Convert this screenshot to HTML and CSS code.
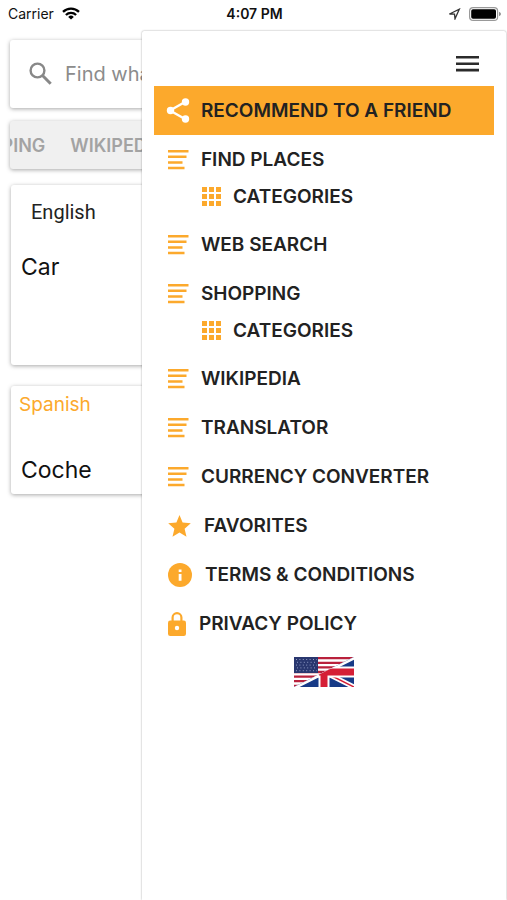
FILE: index.html
```html
<!DOCTYPE html>
<html lang="en">
<head>
<meta charset="utf-8">
<meta name="viewport" content="width=device-width, initial-scale=1">
<title>Translator</title>
<link rel="stylesheet" href="styles.css">
</head>
<body>
<svg class="sprite" aria-hidden="true">
  <symbol id="lines" viewBox="0 0 21 20"><path d="M0 0h20.500v2.500H0zM0 5.600h18.500v2.500H0zM0 11.200h14.500v2.500H0zM0 16.800h16.500v2.500H0z"/></symbol>
  <symbol id="grid" viewBox="0 0 19 19"><path d="M0 0h5v5H0zM7 0h5v5H7zM14 0h5v5h-5zM0 7h5v5H0zM7 7h5v5H7zM14 7h5v5h-5zM0 14h5v5H0zM7 14h5v5H7zM14 14h5v5h-5z"/></symbol>
</svg>
<div class="app">
  <header class="status">
    <div class="status-left">
      <span>Carrier</span>
      <svg width="18" height="13" viewBox="0 0 18 13"><g fill="none" stroke="#000" stroke-width="2.300"><path d="M1 4.900a11.400 11.400 0 0 1 16 0"/><path d="M3.900 8a7.300 7.300 0 0 1 10.200 0"/></g><path d="M9 12.600 6.200 9.900a4 4 0 0 1 5.600 0z"/></svg>
    </div>
    <time class="clock">4:07 PM</time>
    <div class="status-right">
      <svg width="13" height="12" viewBox="0 0 13 12"><path d="M1.500 6 11.300 1.200 7 10.800 6.500 6.200z" fill="none" stroke="#333" stroke-width="1.300"/></svg>
      <svg width="32" height="14" viewBox="0 0 32 14"><rect x=".6" y=".6" width="28" height="12.800" rx="3.500" fill="#fff" stroke="#999" stroke-width="1.200"/><rect x="2.200" y="2.200" width="24.800" height="9.600" rx="1.800"/><path d="M30.200 4.800q1.600.7 1.600 2.200t-1.600 2.200z" fill="#777"/></svg>
    </div>
  </header>

  <main class="page">
    <label class="card search">
      <svg width="24" height="24" viewBox="0 0 24 24"><g fill="none" stroke="#888" stroke-width="2.400"><circle cx="8.500" cy="8.500" r="6.900"/><path d="m13.500 13.500 8.200 8.200" stroke-width="3"/></g></svg>
      <input type="text" aria-label="Search" placeholder="Find what you need">
    </label>
    <nav class="card tabs"><div class="tabs-track"><a href="#shopping">SHOPPING</a><a href="#wikipedia">WIKIPEDIA</a></div></nav>
    <section class="card source"><h2>English</h2><p>Car</p></section>
    <section class="card result"><h2>Spanish</h2><p>Coche</p></section>
  </main>

  <aside class="drawer">
    <div class="drawer-top">
      <button class="toggle" type="button" aria-label="Menu"><svg width="23" height="16" viewBox="0 0 23 16"><path d="M0 0h23v2.600H0zM0 6.400h23V9H0zM0 12.800h23v2.600H0z" fill="#2b2b2b"/></svg></button>
    </div>
    <nav class="menu">
      <a class="item active" href="#share"><svg width="24" height="26" viewBox="0 0 24 26"><path d="M19 4 4 12.500l15 8.500" fill="none" stroke="#fff" stroke-width="2.400"/><g fill="#fff"><circle cx="19.500" cy="4" r="3.700"/><circle cx="4.500" cy="12.500" r="3.700"/><circle cx="19.500" cy="21" r="3.700"/></g></svg>RECOMMEND TO A FRIEND</a>
      <a class="item" href="#places"><svg class="lines"><use href="#lines"/></svg>FIND PLACES</a>
      <a class="item sub" href="#place-categories"><svg class="grid"><use href="#grid"/></svg>CATEGORIES</a>
      <a class="item" href="#web"><svg class="lines"><use href="#lines"/></svg>WEB SEARCH</a>
      <a class="item" href="#shopping"><svg class="lines"><use href="#lines"/></svg>SHOPPING</a>
      <a class="item sub" href="#shop-categories"><svg class="grid"><use href="#grid"/></svg>CATEGORIES</a>
      <a class="item" href="#wikipedia"><svg class="lines"><use href="#lines"/></svg>WIKIPEDIA</a>
      <a class="item" href="#translator"><svg class="lines"><use href="#lines"/></svg>TRANSLATOR</a>
      <a class="item" href="#currency"><svg class="lines"><use href="#lines"/></svg>CURRENCY CONVERTER</a>
      <a class="item" href="#favorites"><svg width="24" height="22" viewBox="0 0 24 22"><path d="m11.500 0 3.100 7.600 8.200.7-6.200 5.400 1.900 8.100-7-4.300-7 4.300 1.900-8.100L.2 8.300l8.200-.7z"/></svg>FAVORITES</a>
      <a class="item" href="#terms"><svg width="25" height="24" viewBox="0 0 25 24"><circle cx="12" cy="12" r="12"/><path d="M10.700 6.400h2.800V9h-2.800zM10.700 11h2.800v6.800h-2.800z" fill="#fff"/></svg>TERMS &amp; CONDITIONS</a>
      <a class="item" href="#privacy"><svg width="19" height="24" viewBox="0 0 19 24"><path d="M4.600 10V5.600a4.400 4.400 0 0 1 8.800 0V10" fill="none" stroke="#fca92c" stroke-width="2.200"/><rect y="8.500" width="18" height="15.500" rx="2.200"/><circle cx="9" cy="16" r="2.200" fill="#fff"/></svg>PRIVACY POLICY</a>
    </nav>
    <button class="language" type="button" aria-label="Language">
      <svg width="60" height="30" viewBox="0 0 60 30">
        <clipPath id="us"><path d="M0 0h60L0 30z"/></clipPath>
        <clipPath id="uk"><path d="M60 0v30H0z"/></clipPath>
        <g clip-path="url(#us)"><path fill="#fff" d="M0 0h60v30H0z"/><path d="M0 1.200h60M0 5.800h60M0 10.400h60M0 15h60M0 19.600h60M0 24.200h60M0 28.800h60" stroke="#b9213c" stroke-width="2.300"/><path fill="#29376f" d="M0 0h24v16.100H0z"/><path d="M2 2.500h21M3 5.300h20M2 8.100h21M3 10.900h20M2 13.700h21" stroke="#8f9ac4" stroke-width="1" stroke-dasharray="1 2.400"/></g>
        <g clip-path="url(#uk)"><path fill="#173a87" d="M0 0h60v30H0z"/><path d="m0 0 60 30M60 0 0 30" stroke="#fff" stroke-width="5"/><path d="m30 15 30 15" stroke="#d51f36" stroke-width="1.500"/><path d="M30 0v30M0 15h60" stroke="#fff" stroke-width="11"/><path d="M30 11.500v18.500M25 15h35" stroke="#d51f36" stroke-width="7"/></g>
      </svg>
    </button>
  </aside>
</div>
</body>
</html>
```
FILE: styles.css
```css
* { box-sizing: border-box; }

body {
  margin: 0;
  background: #fff;
  color: #111;
  font-family: Inter, "Liberation Sans", sans-serif;
}

a { color: inherit; text-decoration: none; }
h2, p { margin: 0; font-weight: 400; }
button { padding: 0; border: 0; background: none; cursor: pointer; }
svg { display: block; flex: none; }
.sprite { position: absolute; width: 0; height: 0; }

.app {
  position: relative;
  min-height: 100vh;
  overflow: hidden;
}

.status {
  display: grid;
  grid-template-columns: 1fr auto 1fr;
  align-items: center;
  height: 27px;
  padding: 0 6px 0 8px;
  font-size: 14px;
}
.status-left, .status-right { display: flex; align-items: center; gap: 8px; }
.status-right { justify-content: flex-end; }
.clock { font-weight: 600; }

.page { padding: 13px 10px; }

.card {
  border-radius: 3px;
  background: #fff;
  box-shadow: 0 1px 4px rgba(0, 0, 0, 0.35);
}

.search {
  display: flex;
  align-items: center;
  gap: 12px;
  height: 68px;
  margin-bottom: 13px;
  padding: 0 19px;
}
.search input {
  flex: 1;
  min-width: 0;
  padding: 0;
  border: 0;
  outline: 0;
  background: none;
  font: 400 20px Inter, "Liberation Sans", sans-serif;
}
.search input::placeholder { color: #8c8c8c; opacity: 1; }

.tabs {
  display: flex;
  height: 48px;
  margin-bottom: 16px;
  overflow: hidden;
  background: #f0f0f0;
  color: #a3a3a3;
  font-size: 18px;
  font-weight: 600;
}
.tabs-track {
  display: flex;
  align-items: center;
  gap: 25px;
  margin-left: -59px;
}

.source, .result { margin-left: 1px; }
.source {
  height: 180px;
  margin-bottom: 21px;
  padding: 14px 10px;
}
.source h2 {
  padding-left: 10px;
  color: #222;
  font: 400 20px/26px Roboto, sans-serif;
}
.source p { margin-top: 27px; }
.source p, .result p { font-size: 23px; line-height: 30px; }

.result { height: 108px; padding: 6px 10px; }
.result h2 {
  margin-left: -2px;
  color: #fca92c;
  font-size: 19px;
  line-height: 26px;
}
.result p { margin-top: 37px; }

.drawer {
  position: absolute;
  top: 31px;
  right: 1px;
  bottom: 0;
  left: 28%;
  padding: 0 12px;
  border-radius: 2px 2px 0 0;
  background: #fff;
  box-shadow: 0 0 2px rgba(0, 0, 0, 0.4);
}
.drawer-top {
  display: flex;
  align-items: center;
  justify-content: flex-end;
  height: 55px;
  padding: 11px 15px 0 0;
}

.item {
  display: flex;
  align-items: center;
  gap: 12px;
  height: 49px;
  padding-left: 14px;
  color: #222;
  font-size: 19px;
  font-weight: 600;
  white-space: nowrap;
}
.item svg { fill: #fca92c; }
.item.active { gap: 11px; padding-left: 12px; background: #fca92c; }
.item.sub {
  height: 36px;
  padding-bottom: 12px;
  padding-left: 48px;
}
.lines { width: 21px; height: 20px; }
.grid { width: 19px; height: 19px; }

.language { display: block; margin: 9px auto 0; }
```
